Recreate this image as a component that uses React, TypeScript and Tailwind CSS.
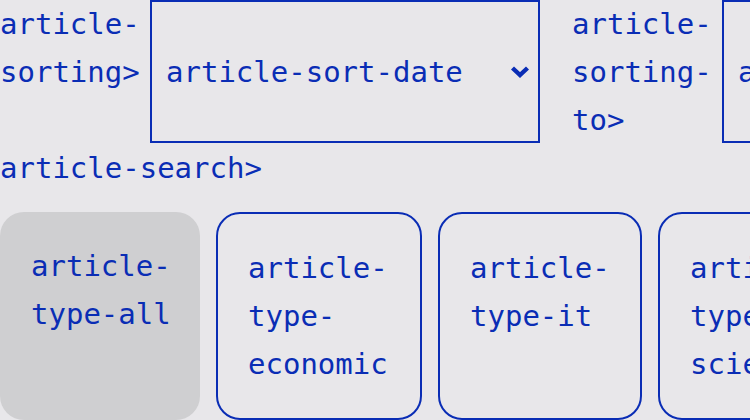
import { useState } from 'react';

const types = [
  { key: 'all', label: 'article-type-all' },
  { key: 'economic', label: 'article-type-economic' },
  { key: 'it', label: 'article-type-it' },
  { key: 'science', label: 'article-type-science' },
];

const cardWidths: Record<string, string> = {
  all: 'w-[200px]',
  economic: 'w-[206px]',
  it: 'w-[204px]',
  science: 'w-[206px]',
};

function Chevron() {
  return (
    <svg
      width="20"
      height="13"
      viewBox="0 0 20 13"
      className="pointer-events-none absolute right-[10px] top-1/2 -translate-y-1/2"
    >
      <path d="M2.5 2.5 L10 9.5 L17.5 2.5" fill="none" stroke="#0a2db5" strokeWidth="4.4" />
    </svg>
  );
}

function SortSelect({ value, options, width }: { value: string; options: string[]; width: string }) {
  const [current, setCurrent] = useState(value);
  return (
    <div className={`relative h-[143px] shrink-0 ${width}`}>
      <select
        value={current}
        onChange={(e) => setCurrent(e.target.value)}
        className="h-full w-full appearance-none rounded-none border-2 border-[#0a2db5] bg-transparent pl-[14px] text-[#0a2db5] outline-none"
      >
        {options.map((o) => (
          <option key={o} value={o}>
            {o}
          </option>
        ))}
      </select>
      <Chevron />
    </div>
  );
}

export default function App() {
  const [active, setActive] = useState('all');

  return (
    <div
      className="h-[420px] w-[750px] overflow-hidden bg-[#e8e7ea] text-[29px] leading-[48px] text-[#0a2db5]"
      style={{ fontFamily: '"DejaVu Sans Mono", "Liberation Mono", monospace' }}
    >
      <div className="flex items-start">
        <label className="w-[140px] shrink-0">article-sorting&gt;</label>
        <div className="ml-[10px]">
          <SortSelect
            value="article-sort-date"
            options={['article-sort-date', 'article-sort-title']}
            width="w-[390px]"
          />
        </div>
        <label className="ml-[32px] w-[140px] shrink-0">article-sorting-to&gt;</label>
        <div className="ml-[10px]">
          <SortSelect
            value="article-sort-desc"
            options={['article-sort-desc', 'article-sort-asc']}
            width="w-[390px]"
          />
        </div>
      </div>

      <div>article-search&gt;</div>

      <div className="mt-5 flex gap-4">
        {types.map((t) => (
          <button
            key={t.key}
            onClick={() => setActive(t.key)}
            className={`flex h-[208px] shrink-0 flex-col items-start justify-start rounded-[24px] text-left ${cardWidths[t.key]} ${
              active === t.key
                ? 'bg-[#cfcfd1] pl-[31px] pt-[30px]'
                : 'border-2 border-[#0a2db5] pl-[30px] pt-[30px]'
            }`}
          >
            <span className="w-[140px]">{t.label}</span>
          </button>
        ))}
      </div>
    </div>
  );
}
